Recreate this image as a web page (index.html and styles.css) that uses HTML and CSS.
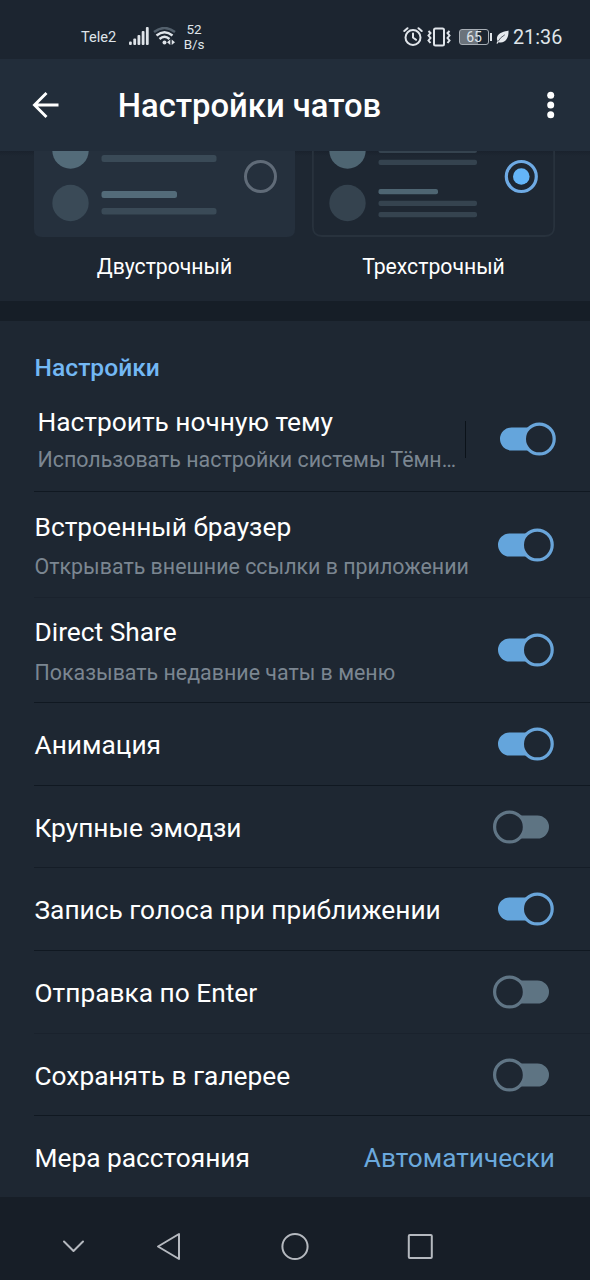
FILE: index.html
```html
<!DOCTYPE html>
<html lang="ru">
<head>
<meta charset="utf-8">
<title>Настройки чатов</title>
<link rel="stylesheet" href="styles.css">
</head>
<body>
<svg width="0" height="0" class="defs" aria-hidden="true">
  <symbol id="on" viewBox="0 0 56 34"><path d="M11.500 5.500H39V28.500H11.500A11.500 11.500 0 0 1 11.500 5.500Z" fill="#64a5dc"/><circle cx="39.300" cy="17" r="14.900" fill="#1e2732" stroke="#69a5da" stroke-width="3.200"/></symbol>
  <symbol id="off" viewBox="0 0 56 34"><path d="M16 5.500H44.500A11.500 11.500 0 0 1 44.500 28.500H16Z" fill="#5e7483"/><circle cx="16.500" cy="17" r="14.900" fill="#1e2732" stroke="#607585" stroke-width="3.200"/></symbol>
</svg>
<div class="status">
  <span class="carrier">Tele2</span>
  <svg class="signal" width="20" height="20" viewBox="0 0 20 20" fill="#dfe4e9"><rect x="0" y="14.500" width="2.800" height="3.500" rx="1"/><rect x="4.300" y="11.500" width="2.800" height="6.500" rx="1"/><rect x="8.500" y="8" width="2.800" height="10" rx="1"/><rect x="12.700" y="4" width="2.800" height="14" rx="1"/><rect x="16.900" y="0" width="2.800" height="18" rx="1"/></svg>
  <svg class="wifi" width="24" height="20" viewBox="0 0 24 20" fill="none" stroke="#dfe4e9" stroke-width="2.400"><path d="M1 5Q11.500 -3 22 5" stroke="#53606c"/><path d="M3.500 8.500Q11.500 2 19.500 8.500"/><path d="M6.500 12Q11.500 7.500 16.500 12"/><circle cx="11.500" cy="15.500" r="2" fill="#dfe4e9" stroke="none"/><path d="M17.300 12.500V18L14 15.200ZM18.700 12.500V18L22 15.200Z" fill="#dfe4e9" stroke="none"/></svg>
  <div class="speed"><span>52</span><span>B/s</span></div>
  <div class="status-right">
    <svg width="20" height="20" viewBox="0 0 20 20" fill="none" stroke="#dfe4e9" stroke-width="2" stroke-linecap="round"><circle cx="10" cy="10.500" r="7.500"/><path d="M10 6.500V10.500L13 12.800M1.300 4L4.500 1.200M18.700 4L15.500 1.200"/></svg>
    <svg class="vibrate" width="24" height="20" viewBox="0 0 24 20" fill="none" stroke="#dfe4e9" stroke-width="2"><rect x="7" y="1.500" width="10" height="17" rx="1.500"/><path d="M1.500 4L3.500 6L1.500 8.500L3.500 11L1.500 13.500L3.500 16M22.500 4L20.500 6L22.500 8.500L20.500 11L22.500 13.500L20.500 16"/></svg>
    <div class="battery"><div class="battery-body">65</div><div class="battery-tip"></div></div>
    <svg class="leaf" width="13" height="14" viewBox="0 0 13 14"><path d="M12.500 0.500C9 1.500 2 2.500 1 7.500Q.6 9.500 1.500 10.800L0.500 13.500L1.500 13.700L2.500 12.200C9 14 13 8 12.500 0.500Z" fill="#e6eaee"/><path d="M2 11.500Q4 7.500 8.800 4.800" fill="none" stroke="#1e2733" stroke-width=".7"/></svg>
    <span class="clock">21:36</span>
  </div>
</div>
<header class="header">
  <svg class="back" width="28" height="28" viewBox="0 0 28 28" fill="none" stroke="#fff" stroke-width="2.900"><path d="M26.500 14H3M14.500 2L2.500 14L14.500 26"/></svg>
  <h1>Настройки чатов</h1>
  <svg class="more" width="8" height="28" viewBox="0 0 8 28" fill="#fff"><circle cx="3.700" cy="4.200" r="3.500"/><circle cx="3.700" cy="14" r="3.500"/><circle cx="3.700" cy="23.800" r="3.500"/></svg>
</header>
<section class="layouts">
  <div class="option option-two">
    <svg width="261" height="86" viewBox="34 151 261 86"><path d="M34 151H295V229Q295 237 287 237H42Q34 237 34 229Z" fill="#25303d"/><circle cx="70.500" cy="150.500" r="18.200" fill="#536b79"/><circle cx="70.500" cy="203" r="18.200" fill="#3a4a57"/><g fill="#3a4a57"><rect x="101.500" y="155" width="115" height="7" rx="2.500"/><rect x="101.500" y="208" width="115" height="6.500" rx="2.500"/></g><rect x="101.500" y="191" width="75.500" height="7" rx="2.500" fill="#536b79"/><circle cx="260.500" cy="176.500" r="15" fill="none" stroke="#606b78" stroke-width="3"/></svg>
    <span>Двустрочный</span>
  </div>
  <div class="option option-three">
    <svg width="243" height="86" viewBox="312 151 243 86"><path d="M312.900 150V227Q312.900 236 322 236H545Q554.100 236 554.100 227V150" fill="none" stroke="#28323d" stroke-width="1.800"/><circle cx="347.500" cy="150.500" r="18.200" fill="#4e6572"/><circle cx="347.500" cy="203" r="18.200" fill="#35434f"/><g fill="#35434f"><rect x="378.500" y="148" width="98.500" height="5" rx="2"/><rect x="378.500" y="159.700" width="98.500" height="5.200" rx="2"/><rect x="378.500" y="200.800" width="98.500" height="5.200" rx="2"/><rect x="378.500" y="212" width="98.500" height="5.200" rx="2"/></g><rect x="378.500" y="189" width="59.500" height="5.200" rx="2" fill="#4e6572"/><circle cx="521.300" cy="176.500" r="15" fill="none" stroke="#6eaae4" stroke-width="3.200"/><circle cx="521.300" cy="176.500" r="8.300" fill="#64b5f8"/></svg>
    <span>Трехстрочный</span>
  </div>
</section>
<div class="gap"></div>
<main class="settings">
  <h2>Настройки</h2>
  <div class="row double night"><div class="text"><b>Настроить ночную тему</b><small>Использовать настройки системы Тёмн…</small></div><i class="separator"></i><svg class="toggle"><use href="#on"/></svg></div>
  <div class="row double browser faint"><div class="text"><b>Встроенный браузер</b><small>Открывать внешние ссылки в приложении</small></div><svg class="toggle"><use href="#on"/></svg></div>
  <div class="row double share"><div class="text"><b>Direct Share</b><small>Показывать недавние чаты в меню</small></div><svg class="toggle"><use href="#on"/></svg></div>
  <div class="row tall"><b>Анимация</b><svg class="toggle"><use href="#on"/></svg></div>
  <div class="row medium"><b>Крупные эмодзи</b><svg class="toggle off"><use href="#off"/></svg></div>
  <div class="row tall"><b>Запись голоса при приближении</b><svg class="toggle"><use href="#on"/></svg></div>
  <div class="row tall faint"><b>Отправка по Enter</b><svg class="toggle off"><use href="#off"/></svg></div>
  <div class="row"><b>Сохранять в галерее</b><svg class="toggle off"><use href="#off"/></svg></div>
  <div class="row last"><b>Мера расстояния</b><span class="value">Автоматически</span></div>
</main>
<nav class="nav">
  <svg width="590" height="83" viewBox="0 0 590 83" fill="none" stroke="#b5b9bf" stroke-width="2" stroke-linecap="round" stroke-linejoin="round"><path d="M64 44.500L73.500 54L83 44.500M179 37V62L158 49.500Z"/><circle cx="295" cy="49.500" r="12.600"/><rect x="408.800" y="38" width="23" height="23" rx="1"/></svg>
</nav>
</body>
</html>
```
FILE: styles.css
```css
* { box-sizing: border-box; }
body { margin: 0; width: 590px; height: 1280px; overflow: hidden; background: #1e2732; color: #fff; font-family: Roboto, "Noto Sans", sans-serif; white-space: nowrap; }
svg { display: block; flex: none; }
.defs { display: none; }
.status { height: 59px; display: flex; align-items: center; background: #1c2530; color: #dfe4e9; padding: 14px 28px 0 81px; }
.carrier { font-size: 14.6px; width: 48px; }
.wifi { margin-left: 4px; }
.speed { display: flex; flex-direction: column; align-items: center; width: 24px; margin-left: 5px; font-size: 13.5px; line-height: 15px; letter-spacing: -0.2px; }
.status-right { display: flex; align-items: center; margin-left: auto; }
.vibrate { margin-left: 4px; }
.battery { display: flex; align-items: center; margin-left: 8px; }
.battery-body { width: 30px; height: 16px; border: 1.5px solid #a8afb6; border-radius: 3px; background: linear-gradient(90deg, #6b737b 65%, #1c2530 65%); font-size: 14px; line-height: 14px; text-align: center; }
.battery-tip { width: 2px; height: 8px; margin-left: 1px; background: #dfe4e9; }
.leaf { margin-left: 4px; }
.clock { width: 49px; margin-left: 4px; padding-top: 2px; font-size: 19.8px; line-height: 24px; }
.header { height: 92px; display: flex; align-items: center; background: #222d3a; padding: 0 35px 0 32px; }
.header h1 { margin: 0 0 0 57.7px; padding-top: 2px; font-size: 32.8px; font-weight: 500; line-height: 40px; }
.more { margin-left: auto; }
.layouts { height: 150px; display: flex; gap: 17px; padding-left: 34px; background: linear-gradient(#1a222d, #1e2732 5px); }
.option { display: flex; flex-direction: column; align-items: center; }
.option span { font-size: 21.2px; line-height: 28px; margin-top: 16px; }
.gap { height: 20px; background: #161e27; }
.settings { height: 876px; background: #1e2732; }
.settings h2 { height: 66px; margin: 0; padding: 32px 0 0 34.6px; font-size: 24.6px; line-height: 30px; font-weight: 500; color: #73b8f4; }
.row { height: 82px; margin-left: 34px; display: flex; align-items: center; border-bottom: 1px solid #101821; padding-right: 36px; }
.tall { height: 83px; }
.double { height: 105px; }
.browser { height: 106px; }
.faint { border-bottom-color: #1a222d; }
.medium { border-bottom-color: #151d27; }
.last { border-bottom: 0; padding-right: 35px; }
.row b { font-size: 26.3px; line-height: 32px; font-weight: 400; padding-top: 2px; margin-left: .5px; }
.text { display: flex; flex-direction: column; align-self: flex-start; padding-top: 17px; }
.text small { font-size: 21.4px; line-height: 26px; margin-top: 11px; color: #7b8691; margin-left: .5px; }
.night { padding-right: 34px; }
.night .text { padding: 17px 0 0 3px; }
.night .text small { margin-top: 9px; }
.share .text { padding-top: 16px; }
.share .text small { margin-top: 12px; }
.separator { width: 1px; height: 37px; margin-left: auto; background: #0b1219; }
.toggle { width: 56px; height: 34px; margin-left: auto; }
.separator + .toggle { margin-left: 34px; }
.toggle.off { margin-right: 5px; }
.value { margin-left: auto; padding-top: 2px; font-size: 26.2px; line-height: 32px; color: #6ba9dd; }
.nav { height: 83px; background: #171e27; }
```
